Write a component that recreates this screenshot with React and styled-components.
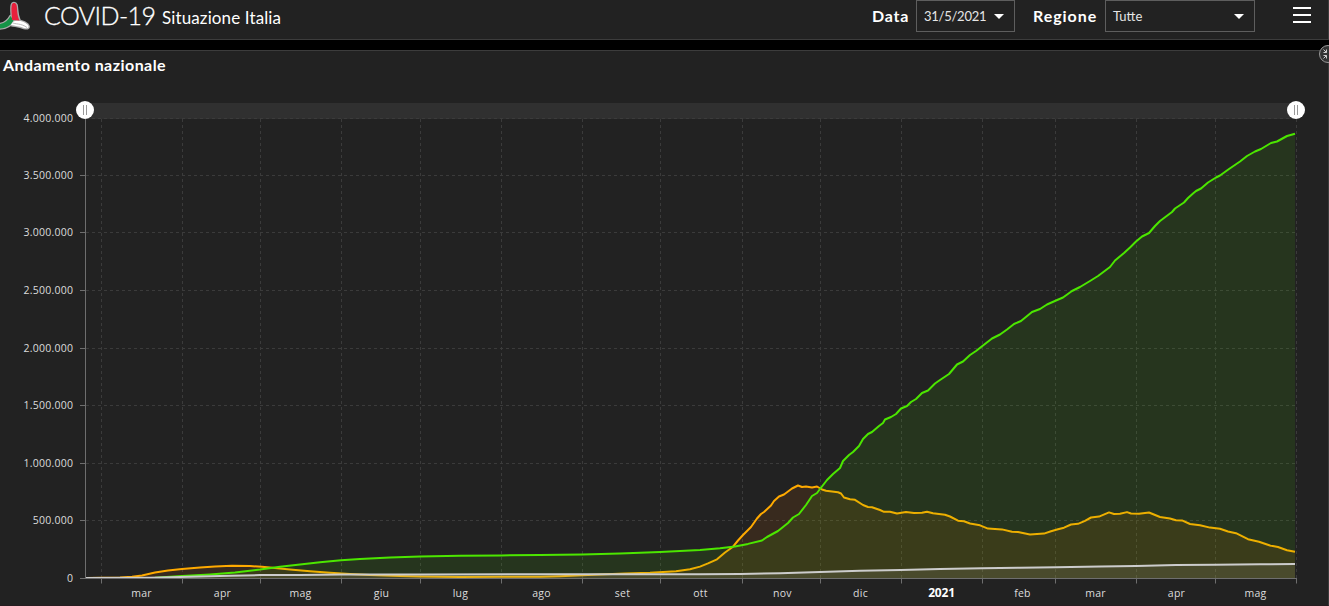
import React from "react";
import styled, { createGlobalStyle } from "styled-components";

const Global = createGlobalStyle`
  * { box-sizing: border-box; }
  html, body { margin: 0; background: #000; overflow: hidden; }
`;
const Page = styled.div`
  width: 1329px;
  height: 606px;
  overflow: hidden;
  display: flex;
  flex-direction: column;
  gap: 10px;
  color: #fff;
  font-family: Lato, sans-serif;
`;
const Header = styled.header`
  height: 40px;
  flex: none;
  display: flex;
  align-items: flex-start;
  background: #222;
  border-bottom: 1px solid #3c3c3c;
  border-right: 1px solid #3c3c3c;
`;
const Logo = styled.svg`
  width: 32px;
  height: 32px;
  flex: none;
`;
const Title = styled.h1`
  margin: 0 0 0 12px;
  font-weight: 300;
  font-size: 25px;
  line-height: 30px;
  letter-spacing: -0.6px;
  -webkit-text-stroke: 0.3px #fff;
  width: 118px;
  white-space: nowrap;
`;
const Subtitle = styled.span`
  font-size: 17px;
  line-height: 36px;
  letter-spacing: 0.12px;
  flex: 1;
  white-space: nowrap;
`;
const Label = styled.label`
  width: ${(p) => p.$width}px;
  font-weight: 700;
  font-size: 16px;
  line-height: 32px;
  letter-spacing: ${(p) => p.$spacing}px;
  white-space: nowrap;
`;
const Select = styled.button`
  width: ${(p) => p.$width}px;
  height: 32px;
  margin: 0 ${(p) => p.$after}px 0 0;
  padding: 0 10px 0 7px;
  display: flex;
  align-items: center;
  justify-content: space-between;
  background: #222;
  border: 1px solid #5e5e5e;
  border-radius: 0;
  color: #e6e6e6;
  font: 400 13px Lato, sans-serif;
  letter-spacing: ${(p) => p.$spacing}px;
`;
const Caret = styled.span`
  border: 5px solid transparent;
  border-top: 5.5px solid #fff;
  border-bottom: 0;
`;
const Menu = styled.button`
  width: 18px;
  height: 16px;
  margin: 7px 17px 0 0;
  padding: 0;
  border: 0;
  background: none;
  display: flex;
  flex-direction: column;
  justify-content: space-between;
`;
const MenuBar = styled.span`
  height: 2px;
  width: 18px;
  background: #fff;
`;
const Panel = styled.section`
  position: relative;
  height: 556px;
  flex: none;
  background: #222;
  border-top: 1px solid #3c3c3c;
  border-right: 1px solid #3c3c3c;
  border-bottom: 1px solid #261c20;
`;
const PanelTitle = styled.h2`
  margin: 0;
  padding-left: 3px;
  height: 34px;
  font-size: 16px;
  line-height: 28px;
  font-weight: 700;
  letter-spacing: 0.45px;
`;
const Collapse = styled.svg`
  position: absolute;
  top: -7px;
  left: 1318px;
  width: 20px;
  height: 20px;
`;
const Chart = styled.svg`
  display: block;
  width: 1328px;
  height: 518px;
  text { font-family: "Open Sans", sans-serif; font-size: 10.5px; letter-spacing: 0.25px; fill: #dcdcdc; }
  text.year { font-family: "Noto Sans", sans-serif; font-size: 12px; font-weight: 700; fill: #fff; letter-spacing: -0.2px; }
`;

const monthTicks = [101.5, 182.5, 260.5, 341.5, 420.5, 501.5, 582.5, 660.5, 742.5, 820.5, 901.5, 982.5, 1055.5, 1136.5, 1215.5, 1296.5];
const months = ["mar", "apr", "mag", "giu", "lug", "ago", "set", "ott", "nov", "dic", "2021", "feb", "mar", "apr", "mag"];
const values = ["4.000.000", "3.500.000", "3.000.000", "2.500.000", "2.000.000", "1.500.000", "1.000.000", "500.000", "0"];
const valueTicks = [118.5, 175.5, 232.5, 290.5, 348.5, 405.5, 463.5, 520.5, 578.5];

const recovered = "86,578 130,578 155,577.7 182,576 210,574.4 235,572.5 260,569.6 280,566.8 300,564.4 320,562.3 341,560.2 360,559.1 390,557.5 420,556.4 460,555.7 501,555.4 540,555.1 582,554.5 620,553.6 660,552 700,550 720,548.3 735,546.5 748,543.9 762,540.5 767,537 778,531 788,523 793,517.5 799,514 806,505 812,496 817,493 820,489 827,480 833,474 840,468 843,461 849,455 853,452 859,446 863,439 868,434 872,432 879,426 883,423 885,419.5 891,417 896,414 901,408.5 907,406 911,402 916,399 922,393 928,390.5 935,383.5 940,380 949,374 957,364.5 963,361.5 970,355 976,351 983,345.5 992,338.5 1000,334.5 1007,329.5 1014,324 1021,321 1032,312 1040,309 1047,304.5 1056,300.5 1063,297.5 1072,291 1080,287 1090,281 1098,276 1104,271.5 1110,267 1115,260.5 1124,253 1130,247.5 1136,241.5 1142,236.5 1149,233 1155,226 1160,221 1168,215 1172,212 1175,208.5 1184,202.5 1188,198 1193,193.5 1196,191 1201,188.5 1208,182.5 1216,177.5 1220,175.5 1229,169 1240,161.5 1247,156 1255,151.5 1261,149 1271,143 1277,141.5 1287,136 1295,133.8";
const active = "86,578 120,577.6 132,576.7 142,575.4 155,572.5 168,570.4 182,569 200,567.6 215,566.5 232,565.8 250,566.1 262,566.7 275,567.9 290,569.4 310,571.2 330,572.7 350,574.1 370,575.1 400,576.1 420,576.6 460,576.9 501,576.8 540,576.7 560,576.2 582,575.2 600,574.4 625,573.5 650,572.8 676,571.3 690,569.3 700,566.6 708,563.4 717,559.3 725,552.5 733,546.7 738,540.5 743,535 751,527 757,518.5 761,514 764,512 771,505.5 774,501 779,496.5 784,494.5 792,488.5 798,485.5 802,487 806,486.5 812,487.5 817,486.5 822,489.5 826,490.8 838,492.3 841,493.5 844,497.5 850,499.3 855,499.8 863,505 868,507 872,507.2 880,510 884,511.8 890,511.7 897,513.5 906,512 914,512.9 922,512.8 927,511.7 933,513.2 945,514.7 950,516.5 958,520.7 964,521.2 970,523.5 980,525.3 988,528.6 1002,529.4 1012,531.7 1018,532 1030,534.4 1044,533.6 1051,531.2 1058,529.2 1064,527.7 1071,524.5 1078,523.8 1085,520.8 1091,517.5 1099,516.6 1109,512.4 1114,514 1120,513.7 1127,512.1 1131,513.5 1139,513.7 1149,512.5 1160,517 1170,518.5 1176,520.2 1182,520.4 1190,524 1200,525.3 1210,527.6 1220,528.8 1228,531.5 1236,533.2 1248,539.2 1259,541.8 1270,545.5 1278,547 1287,550.2 1295,551.7";
const deaths = "86,578 150,577.7 170,577.2 200,576.5 230,575.8 260,575.1 300,574.9 341,574.6 420,574.4 582,574.3 700,574.2 740,574 780,573.3 820,572 860,570.8 901,570 940,569.1 982,568.3 1020,567.7 1056,567.3 1100,566.5 1136,565.9 1176,565 1215,564.7 1260,564.2 1295,564";

const Series = ({ points, stroke, fill, opacity }) => (
  <g>
    <polygon points={`86,578 ${points} 1295,578`} fill={fill || stroke} fillOpacity={opacity} />
    <polyline points={points} fill="none" stroke={stroke} strokeWidth="2" strokeLinejoin="round" />
  </g>
);
const Knob = ({ x }) => (
  <g>
    <circle cx={x} cy="110" r="9" fill="#fff" />
    <path d={`M${x - 1.5} 105v10M${x + 1.5} 105v10`} stroke="#999" strokeWidth="1" />
  </g>
);

const RED = "M11.800 5C12.500 2.400 15.500 2.400 16.500 5C17.500 9 16.500 14 19.500 20.500L12 20C12 14 10.800 9 11.800 5Z";
const GREEN = "M-4 28.500C5 29 11 26 13.500 20.500L10.500 16C8 21 3 24.500 -4 24.500Z";
const WHITE = "M12.500 22C17 19.500 24 21 27.500 24.500C30 27.500 28 29 24 28C19 26 15 26 11 25Z";

export default function App() {
  return (
    <Page>
      <Global />
      <Header>
        <Logo viewBox="0 0 32 32">
          <g stroke="#aaa" strokeWidth="2.600" strokeLinejoin="round">
            <path d={GREEN} /><path d={RED} /><path d={WHITE} />
          </g>
          <path d={GREEN} fill="#159447" />
          <path d={WHITE} fill="#fff" />
          <path d={RED} fill="#e9203c" />
          <path d="M12 22.500C15 24.500 21 23 27 27.500" fill="none" stroke="#aaa" strokeWidth="0.800" />
        </Logo>
        <Title>COVID-19</Title>
        <Subtitle>Situazione Italia</Subtitle>
        <Label $width={44} $spacing={0.75}>Data</Label>
        <Select $width={99} $after={18} $spacing={-0.25}>31/5/2021<Caret /></Select>
        <Label $width={72} $spacing={0.95}>Regione</Label>
        <Select $width={150} $after={38} $spacing={0}>Tutte<Caret /></Select>
        <Menu aria-label="Menu"><MenuBar /><MenuBar /><MenuBar /></Menu>
      </Header>
      <Panel>
        <PanelTitle>Andamento nazionale</PanelTitle>
        <Chart viewBox="0 85 1328 518">
          <rect x="85" y="103" width="1211" height="16" fill="#303030" />
          <g stroke="#3b3b3b" strokeDasharray="3 3">
            {valueTicks.slice(0, 8).map((y) => <path key={y} d={`M86 ${y}H1296`} />)}
            {monthTicks.map((x) => <path key={x} d={`M${x} 119V578`} />)}
          </g>
          <Series points={active} stroke="#ffaa00" fill="#ff7300" opacity={0.1} />
          <Series points={recovered} stroke="#4ce600" opacity={0.1} />
          <Series points={deaths} stroke="#ccc" opacity={0.1} />
          <g stroke="#6e6e6e">
            <path d="M85.500 119V578.500H1296" fill="none" />
            {valueTicks.slice(1).map((y) => <path key={y} d={`M80 ${y}H86`} />)}
            {monthTicks.map((x) => <path key={x} d={`M${x} 578V583.500`} />)}
          </g>
          {values.map((v, i) => <text key={v} x="73.300" y={valueTicks[i] + 3.5} textAnchor="end">{v}</text>)}
          {months.map((m, i) => (
            <text key={i} className={m === "2021" ? "year" : undefined} x={monthTicks[i] + 40} y="597" textAnchor="middle">{m}</text>
          ))}
          <Knob x={85} />
          <Knob x={1296} />
        </Chart>
        <Collapse viewBox="0 0 20 20">
          <circle cx="10" cy="10" r="8.500" fill="#333" stroke="#999" />
          <path d="M5.500 5.500l3 3M8.500 5.500v3h-3M5.500 14.500l3-3M8.500 14.500v-3h-3" fill="none" stroke="#ccc" />
        </Collapse>
      </Panel>
    </Page>
  );
}
